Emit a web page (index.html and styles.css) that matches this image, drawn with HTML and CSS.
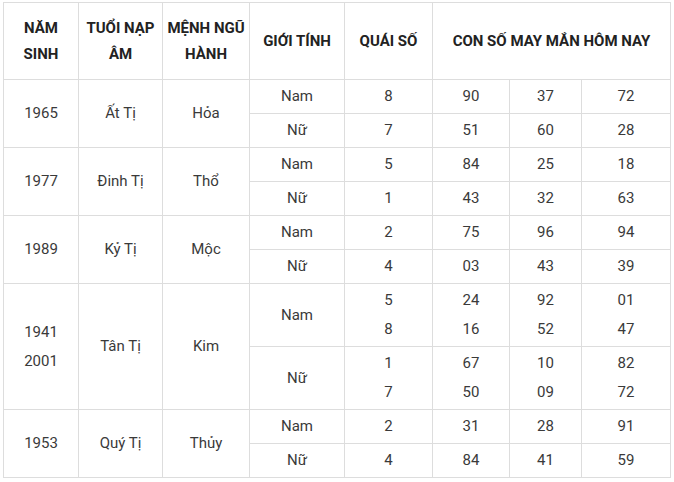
FILE: index.html
```html
<!DOCTYPE html>
<html lang="vi">
<head>
<meta charset="utf-8">
<title>Con số may mắn</title>
<link rel="stylesheet" href="styles.css">
</head>
<body>
<table class="lucky">
  <colgroup>
    <col class="c1"><col class="c2"><col class="c3"><col class="c4"><col class="c5"><col class="c6"><col class="c7"><col class="c8">
  </colgroup>
  <thead>
    <tr>
      <th>NĂM<br>SINH</th>
      <th>TUỔI NẠP<br>ÂM</th>
      <th>MỆNH NGŨ<br>HÀNH</th>
      <th>GIỚI TÍNH</th>
      <th>QUÁI SỐ</th>
      <th colspan="3">CON SỐ MAY MẮN HÔM NAY</th>
    </tr>
  </thead>
  <tbody>
    <tr><td rowspan="2">1965</td><td rowspan="2">Ất Tị</td><td rowspan="2">Hỏa</td><td>Nam</td><td>8</td><td>90</td><td>37</td><td>72</td></tr>
    <tr><td>Nữ</td><td>7</td><td>51</td><td>60</td><td>28</td></tr>
    <tr><td rowspan="2">1977</td><td rowspan="2">Đinh Tị</td><td rowspan="2">Thổ</td><td>Nam</td><td>5</td><td>84</td><td>25</td><td>18</td></tr>
    <tr><td>Nữ</td><td>1</td><td>43</td><td>32</td><td>63</td></tr>
    <tr><td rowspan="2">1989</td><td rowspan="2">Kỷ Tị</td><td rowspan="2">Mộc</td><td>Nam</td><td>2</td><td>75</td><td>96</td><td>94</td></tr>
    <tr><td>Nữ</td><td>4</td><td>03</td><td>43</td><td>39</td></tr>
    <tr><td rowspan="2">1941<br>2001</td><td rowspan="2">Tân Tị</td><td rowspan="2">Kim</td><td>Nam</td><td>5<br>8</td><td>24<br>16</td><td>92<br>52</td><td>01<br>47</td></tr>
    <tr><td>Nữ</td><td>1<br>7</td><td>67<br>50</td><td>10<br>09</td><td>82<br>72</td></tr>
    <tr><td rowspan="2">1953</td><td rowspan="2">Quý Tị</td><td rowspan="2">Thủy</td><td>Nam</td><td>2</td><td>31</td><td>28</td><td>91</td></tr>
    <tr><td>Nữ</td><td>4</td><td>84</td><td>41</td><td>59</td></tr>
  </tbody>
</table>
</body>
</html>
```
FILE: styles.css
```css
html, body {
  margin: 0;
  padding: 0;
  background: #ffffff;
}
body {
  padding: 2px 0 0 3px;
  font-family: Roboto, "Liberation Sans", Arial, sans-serif;
}
.lucky {
  border-collapse: collapse;
  table-layout: fixed;
  width: 668px;
  font-size: 15px;
  color: #3a3a3a;
}
.lucky .c1 { width: 75px; }
.lucky .c2 { width: 84px; }
.lucky .c3 { width: 87px; }
.lucky .c4 { width: 95px; }
.lucky .c5 { width: 88px; }
.lucky .c6 { width: 77px; }
.lucky .c7 { width: 72px; }
.lucky .c8 { width: 89px; }
.lucky th,
.lucky td {
  border: 1px solid #dddddd;
  text-align: center;
  vertical-align: middle;
  padding: 2px 2px;
  line-height: 29px;
}
.lucky th {
  font-weight: 700;
  color: #222222;
  line-height: 26px;
  padding: 12px 2px;
}
```
